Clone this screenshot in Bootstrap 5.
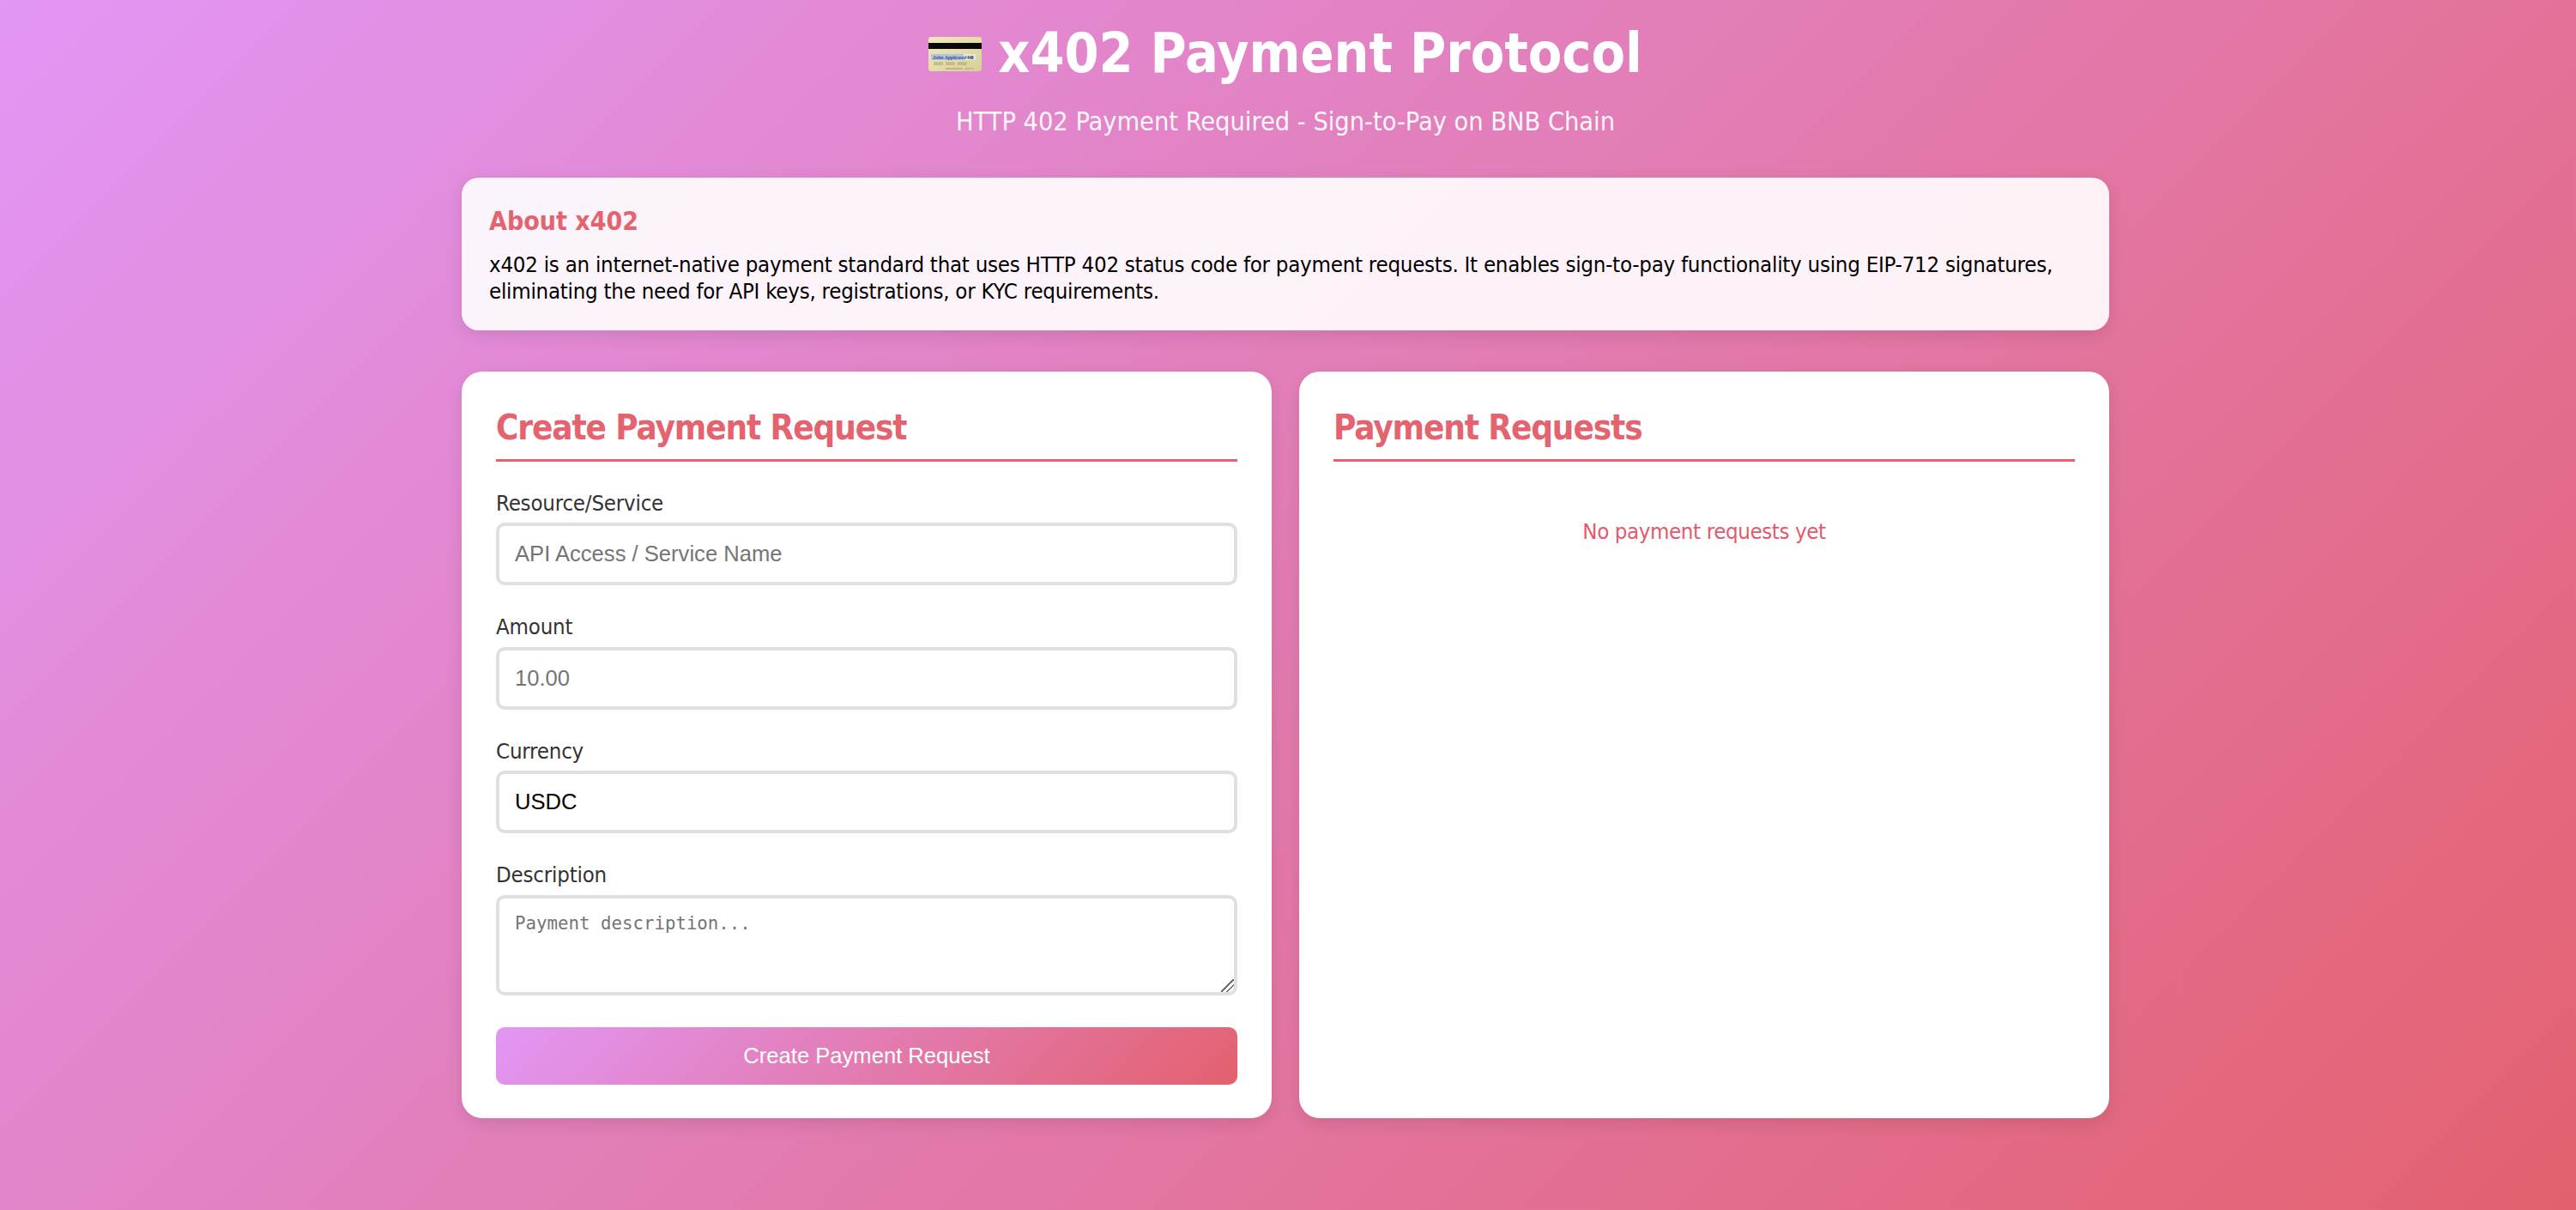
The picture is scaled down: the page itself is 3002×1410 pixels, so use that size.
<!doctype html>
<html lang="en">
<head>
<meta charset="utf-8">
<title>x402 Payment Protocol</title>
<link href="https://cdn.jsdelivr.net/npm/bootstrap@5.3.0/dist/css/bootstrap.min.css" rel="stylesheet">
<style>
html,body{height:100%}
body{min-height:1410px;padding-right:6px;background:linear-gradient(135deg,#e296f5 0%,#e3616e 100%);font-family:"DejaVu Sans Condensed","DejaVu Sans",sans-serif;color:#000;overflow:hidden}
.pay-shell{width:1920px;margin:0 auto}
.pay-head{padding-top:24px;height:207px;color:#fff;text-align:center}
.pay-title{font-size:64px;line-height:77px;font-weight:700;margin:0 0 23px;display:flex;justify-content:center;align-items:center;gap:19px;font-family:inherit}
.pay-sub{font-size:30.4px;line-height:36px;margin:0;opacity:.92}
.pay-about{background:rgba(255,255,255,.9);border-radius:20px;padding:32px;height:178px;margin-bottom:48px;box-shadow:0 6px 20px rgba(0,0,0,.1)}
.pay-about h3{font-size:30px;line-height:38px;font-weight:700;color:#e3636f;margin:0 0 16px}
.pay-about p{font-size:25.6px;line-height:31px;letter-spacing:-.24px;margin:0}
.pay-row{--bs-gutter-x:32px;--bs-gutter-y:0}
.pay-panel{background:#fff;border:0;border-radius:24px;padding:40px;height:870px;box-shadow:0 6px 20px rgba(0,0,0,.1)}
.pay-panel h2{font-size:40px;line-height:50px;letter-spacing:-1.1px;font-weight:700;color:#e3636f;margin:0 0 29.5px;padding-bottom:12px;border-bottom:3px solid #e3636f;height:65px}
.pay-label{display:block;font-size:25.6px;line-height:37.5px;letter-spacing:-.2px;color:#333;margin:0 0 4px}
.pay-group{margin-bottom:30px}
.pay-input.form-control{height:73px;border:4px solid #e0e0e0;border-radius:10px;padding:0 18px;font:25.6px "Liberation Sans",Arial,sans-serif;color:#000;box-shadow:none}
.pay-input.form-control::placeholder{color:#757575;opacity:1}
textarea.pay-input.form-control{height:117px;min-height:117px;padding:16px 18px;font:20.75px/26px "DejaVu Sans Mono",monospace;display:block}
textarea.pay-input.form-control::-webkit-resizer{background:linear-gradient(135deg,transparent 0 46%,#6f6f6f 46% 54%,transparent 54% 68%,#6f6f6f 68% 76%,transparent 76%)}
.pay-group-last{margin-bottom:37px}
.pay-submit.btn{display:block;width:100%;height:67px;padding:0;border:0;border-radius:10px;background:linear-gradient(135deg,#e296f5 0%,#e3616e 100%);color:#fff;font:25.6px "Liberation Sans",Arial,sans-serif}
.pay-empty{text-align:center;color:#e35a6c;font-size:25.6px;line-height:31px;letter-spacing:-.38px;margin-top:36px}
</style>
</head>
<body>
<div class="pay-shell">
  <header class="pay-head">
    <h1 class="pay-title">
      <svg width="62" height="40" viewBox="0 0 62 40" aria-hidden="true">
        <defs><linearGradient id="cg" x1="0" y1="0" x2="1" y2="1"><stop offset="0" stop-color="#f1ebbb"/><stop offset="1" stop-color="#d8cf97"/></linearGradient></defs>
        <rect width="62" height="40" rx="3" fill="url(#cg)"/>
        <rect y="7" width="62" height="7" fill="#0b0908"/>
        <rect x="3" y="20" width="52" height="7" fill="#e4e6ea"/>
        <rect x="3" y="20" width="38" height="7" fill="#b4c3dc"/>
        <text x="5" y="26" font-size="6" font-style="italic" fill="#2d4f9c" font-family="Liberation Serif">John Appleseed</text>
        <text x="45" y="26" font-size="4.5" font-weight="700" fill="#222" font-family="Liberation Sans">448</text>
        <text x="6" y="32.5" font-size="4.6" fill="#a9a277" font-family="Liberation Mono">0000 0000 0000</text>
        <text x="20" y="38" font-size="4.2" fill="#a9a277" font-family="Liberation Mono">00000000 APPL</text>
      </svg>
      <span>x402 Payment Protocol</span>
    </h1>
    <p class="pay-sub">HTTP 402 Payment Required - Sign-to-Pay on BNB Chain</p>
  </header>
  <section class="pay-about">
    <h3>About x402</h3>
    <p>x402 is an internet-native payment standard that uses HTTP 402 status code for payment requests. It enables sign-to-pay functionality using EIP-712 signatures, eliminating the need for API keys, registrations, or KYC requirements.</p>
  </section>
  <div class="row pay-row">
    <div class="col-6">
      <div class="card pay-panel">
        <h2>Create Payment Request</h2>
        <form>
          <div class="pay-group"><label class="pay-label" for="r">Resource/Service</label><input id="r" class="form-control pay-input" placeholder="API Access / Service Name"></div>
          <div class="pay-group"><label class="pay-label" for="a">Amount</label><input id="a" class="form-control pay-input" placeholder="10.00"></div>
          <div class="pay-group"><label class="pay-label" for="c">Currency</label><input id="c" class="form-control pay-input" value="USDC"></div>
          <div class="pay-group-last"><label class="pay-label" for="d">Description</label><textarea id="d" class="form-control pay-input" placeholder="Payment description..."></textarea></div>
          <button type="button" class="btn pay-submit">Create Payment Request</button>
        </form>
      </div>
    </div>
    <div class="col-6">
      <div class="card pay-panel">
        <h2>Payment Requests</h2>
        <div class="pay-empty">No payment requests yet</div>
      </div>
    </div>
  </div>
</div>
</body>
</html>
